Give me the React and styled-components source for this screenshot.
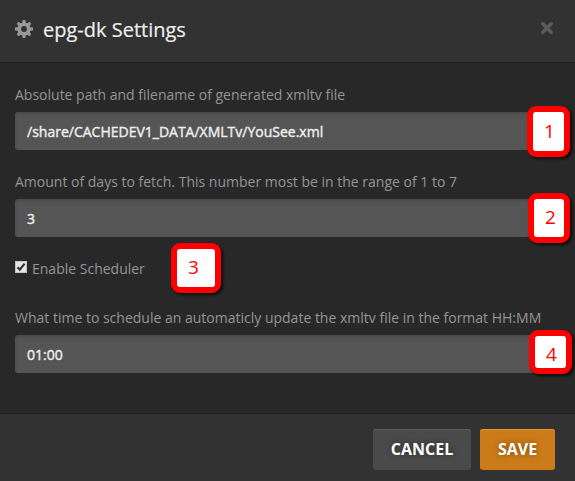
import React from "react";
import styled, { createGlobalStyle } from "styled-components";

const GlobalStyle = createGlobalStyle`
  * { box-sizing: border-box; }
  body {
    margin: 0;
    overflow: hidden;
    background: #282828;
    font-family: "Open Sans", "Noto Sans", sans-serif;
  }
`;

const Dialog = styled.form`
  display: flex;
  flex-direction: column;
  width: 575px;
  height: 481px;
  background: #282828;
  color: #959595;
`;

const Header = styled.header`
  display: flex;
  align-items: center;
  height: 63px;
  padding: 0 21px 4px 15px;
  background: #323232;
  border-bottom: 1px solid #1f1f1f;
`;

const Title = styled.h1`
  flex: 1;
  margin: 2px 0 0 10px;
  font-size: 20px;
  line-height: 28px;
  font-weight: 400;
  color: #eee;
  -webkit-text-stroke: 0.2px #eee;
`;

const CloseButton = styled.button`
  display: flex;
  margin: 0 1px 3px 0;
  padding: 0;
  border: 0;
  background: none;
`;

const Body = styled.main`
  flex: 1;
  padding: 22px 15px 0;
`;

const Field = styled.div`
  position: relative;
  display: flex;
  flex-direction: column;
  height: ${(p) => p.$height}px;
`;

const Label = styled.label`
  height: 27px;
  font-size: 14px;
  line-height: 20px;
  white-space: nowrap;
`;

const Input = styled.input`
  width: 100%;
  height: 38px;
  padding: 1px 12px 0;
  border: 0;
  border-radius: 3px;
  outline: 0;
  background: #555;
  box-shadow: inset 0 2px 3px rgba(0, 0, 0, 0.13);
  color: #eee;
  font: 400 14px "Open Sans", "Noto Sans", sans-serif;
  -webkit-text-stroke: 0.4px #eee;
`;

const CheckRow = styled.div`
  position: relative;
  display: flex;
  align-items: flex-start;
  gap: 5px;
  height: 49px;
`;

const Checkbox = styled.span`
  display: flex;
  width: 12px;
  height: 12px;
  margin-top: 2px;
  border: 1px solid #c4c4c4;
  background: #e5e5e5;
`;

const Callout = styled.span`
  position: absolute;
  left: ${(p) => p.$left}px;
  top: ${(p) => p.$top}px;
  width: ${(p) => p.$width}px;
  height: ${(p) => p.$height}px;
  padding: ${(p) => p.$inset};
  border: 6px solid #f00;
  border-radius: 9px;
  background: #fff;
  box-shadow: 2px 2px 3px rgba(0, 0, 0, 0.75);
  color: #f00;
  font-size: 19px;
  line-height: 20px;
`;

const Footer = styled.footer`
  display: flex;
  justify-content: flex-end;
  align-items: flex-start;
  gap: 9px;
  height: 68px;
  padding: 15px 20px 0 0;
  background: #323232;
  border-top: 1px solid #1f1f1f;
`;

const Button = styled.button`
  width: ${(p) => p.$width}px;
  height: 41px;
  padding: 0 0 2px;
  border: 0;
  border-radius: 3px;
  background: ${(p) => (p.$primary ? "#cc7b19" : "#4a4a4a")};
  box-shadow: inset 0 1px 0 ${(p) => (p.$primary ? "#e59029" : "#5c5c5c")};
  color: #fff;
  font: 700 16px "Open Sans", "Noto Sans", sans-serif;
  text-shadow: 0 0 6px rgba(0, 0, 0, 0.4);
`;

const teeth = [0, 45, 90, 135, 180, 225, 270, 315];

function Gear() {
  return (
    <svg width="18" height="18" viewBox="0 0 18 18" fill="#999" aria-hidden="true">
      <path
        fillRule="evenodd"
        d="M9 2.4a6.6 6.6 0 1 0 0 13.2A6.6 6.6 0 0 0 9 2.4Zm0 3.7a2.9 2.9 0 1 1 0 5.8 2.9 2.9 0 0 1 0-5.8Z"
      />
      {teeth.map((angle) => (
        <path key={angle} d="M7.2 3.3 7.6 0h2.8l.4 3.3Z" transform={`rotate(${angle} 9 9)`} />
      ))}
    </svg>
  );
}

function Cross() {
  return (
    <svg width="12" height="12" viewBox="0 0 12 12" aria-hidden="true">
      <path d="M1.8 1.8 10.2 10.2M10.2 1.8 1.8 10.2" stroke="#5c5c5c" strokeWidth="3.4" strokeLinecap="round" />
    </svg>
  );
}

export default function App() {
  return (
    <>
      <GlobalStyle />
      <Dialog>
        <Header>
          <Gear />
          <Title>epg-dk Settings</Title>
          <CloseButton type="button" aria-label="Close">
            <Cross />
          </CloseButton>
        </Header>
        <Body>
          <Field $height={87}>
            <Label htmlFor="path">Absolute path and filename of generated xmltv file</Label>
            <Input id="path" defaultValue="/share/CACHEDEV1_DATA/XMLTv/YouSee.xml" />
            <Callout $left={512} $top={21} $width={43} $height={51} $inset="9px 0 0 11px">1</Callout>
          </Field>
          <Field $height={87}>
            <Label htmlFor="days">Amount of days to fetch. This number most be in the range of 1 to 7</Label>
            <Input id="days" defaultValue="3" />
            <Callout $left={513} $top={21} $width={42} $height={50} $inset="8px 0 0 11px">2</Callout>
          </Field>
          <CheckRow>
            <Checkbox role="checkbox" aria-checked="true" aria-labelledby="scheduler">
              <svg width="10" height="10" viewBox="0 0 10 10" aria-hidden="true">
                <path d="M1.5 5.2 3.8 7.6 8.6 1.6" fill="none" stroke="#333" strokeWidth="2.2" />
              </svg>
            </Checkbox>
            <Label id="scheduler">Enable Scheduler</Label>
            <Callout $left={156} $top={-16} $width={50} $height={50} $inset="8px 0 0 11px">3</Callout>
          </CheckRow>
          <Field $height={65}>
            <Label htmlFor="time">What time to schedule an automaticly update the xmltv file in the format HH:MM</Label>
            <Input id="time" defaultValue="01:00" />
            <Callout $left={514} $top={22} $width={43} $height={44} $inset="8px 0 0 11px">4</Callout>
          </Field>
        </Body>
        <Footer>
          <Button type="button" $width={98}>CANCEL</Button>
          <Button type="button" $width={75} $primary>SAVE</Button>
        </Footer>
      </Dialog>
    </>
  );
}
